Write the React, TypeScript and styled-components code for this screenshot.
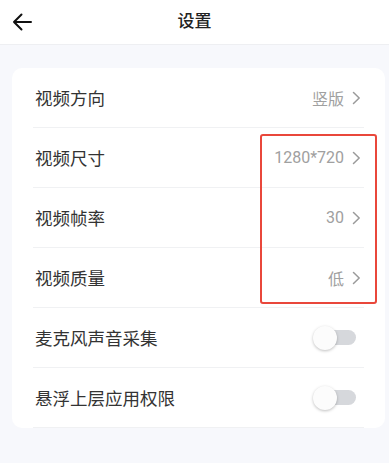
import React from "react";
import styled, { createGlobalStyle } from "styled-components";

const Global = createGlobalStyle`
  html, body { margin: 0; padding: 0; }
  body {
    background: #f7f8fc;
    font-family: "Noto Sans CJK SC", "Noto Sans", sans-serif;
    -webkit-font-smoothing: antialiased;
  }
`;

const Page = styled.div`
  width: 389px;
  height: 463px;
  background: #f7f8fc;
  position: relative;
  overflow: hidden;
`;

const Header = styled.header`
  height: 44px;
  background: #fff;
  border-bottom: 1px solid #eeeff2;
  display: grid;
  grid-template-columns: 44px 1fr 44px;
  align-items: center;
`;

const BackButton = styled.button`
  border: 0;
  background: none;
  padding: 0 0 0 11px;
  height: 44px;
  display: flex;
  align-items: center;
  cursor: pointer;
`;

const Title = styled.h1`
  margin: 0;
  text-align: center;
  font-size: 17px;
  font-weight: 500;
  color: #222;
  line-height: 44px;
  position: relative;
  top: -2px;
`;

const Card = styled.section`
  margin: 23px 4px 0 12px;
  background: #fff;
  border-radius: 10px;
  overflow: hidden;
`;

const Row = styled.div`
  height: 59px;
  margin: 0 21px;
  padding: 0 3px 0 2px;
  border-bottom: 1px solid #f0f1f3;
  display: flex;
  align-items: center;
  justify-content: space-between;
`;

const Label = styled.span`
  font-size: 17.5px;
  color: #333;
`;

const ValueWrap = styled.span`
  display: flex;
  align-items: center;
  gap: 8px;
  color: #a0a0a0;
  font-family: "Roboto", "Noto Sans CJK SC", sans-serif;
  font-size: 16px;
`;

const Track = styled.span<{ $on?: boolean }>`
  position: relative;
  width: 42px;
  height: 15px;
  border-radius: 8px;
  background: ${(p) => (p.$on ? "#4a7cf7" : "#d6d8dc")};
  margin-right: 5px;
  display: inline-block;
`;

const Thumb = styled.span`
  position: absolute;
  left: -1px;
  top: 50%;
  width: 24px;
  height: 24px;
  margin-top: -12px;
  border-radius: 50%;
  background: #fcfcfc;
  box-shadow: 0 1px 3px rgba(0, 0, 0, 0.25);
`;

const Highlight = styled.div`
  position: absolute;
  left: 260px;
  top: 134px;
  width: 113px;
  height: 166px;
  border: 2px solid #e9473b;
  border-radius: 3px;
  pointer-events: none;
`;

const Chevron = () => (
  <svg width="9" height="14" viewBox="0 0 9 14" fill="none">
    <path d="M1.5 1.5 L7.2 7 L1.5 12.5" stroke="#9a9a9a" strokeWidth="1.5" strokeLinecap="round" strokeLinejoin="round" />
  </svg>
);

const BackArrow = () => (
  <svg width="22" height="22" viewBox="0 0 22 22" fill="none">
    <path d="M20 11 H3 M10.5 3.5 L3 11 L10.5 18.5" stroke="#111" strokeWidth="2" strokeLinecap="round" strokeLinejoin="round" />
  </svg>
);

const selects = [
  { label: "视频方向", value: "竖版" },
  { label: "视频尺寸", value: "1280*720" },
  { label: "视频帧率", value: "30" },
  { label: "视频质量", value: "低" },
];

const toggles = ["麦克风声音采集", "悬浮上层应用权限"];

export default function App() {
  return (
    <Page>
      <Global />
      <Header>
        <BackButton aria-label="返回">
          <BackArrow />
        </BackButton>
        <Title>设置</Title>
        <span />
      </Header>
      <Card>
        {selects.map((s) => (
          <Row key={s.label}>
            <Label>{s.label}</Label>
            <ValueWrap>
              {s.value}
              <Chevron />
            </ValueWrap>
          </Row>
        ))}
        {toggles.map((t) => (
          <Row key={t}>
            <Label>{t}</Label>
            <Track>
              <Thumb />
            </Track>
          </Row>
        ))}
      </Card>
      <Highlight />
    </Page>
  );
}
